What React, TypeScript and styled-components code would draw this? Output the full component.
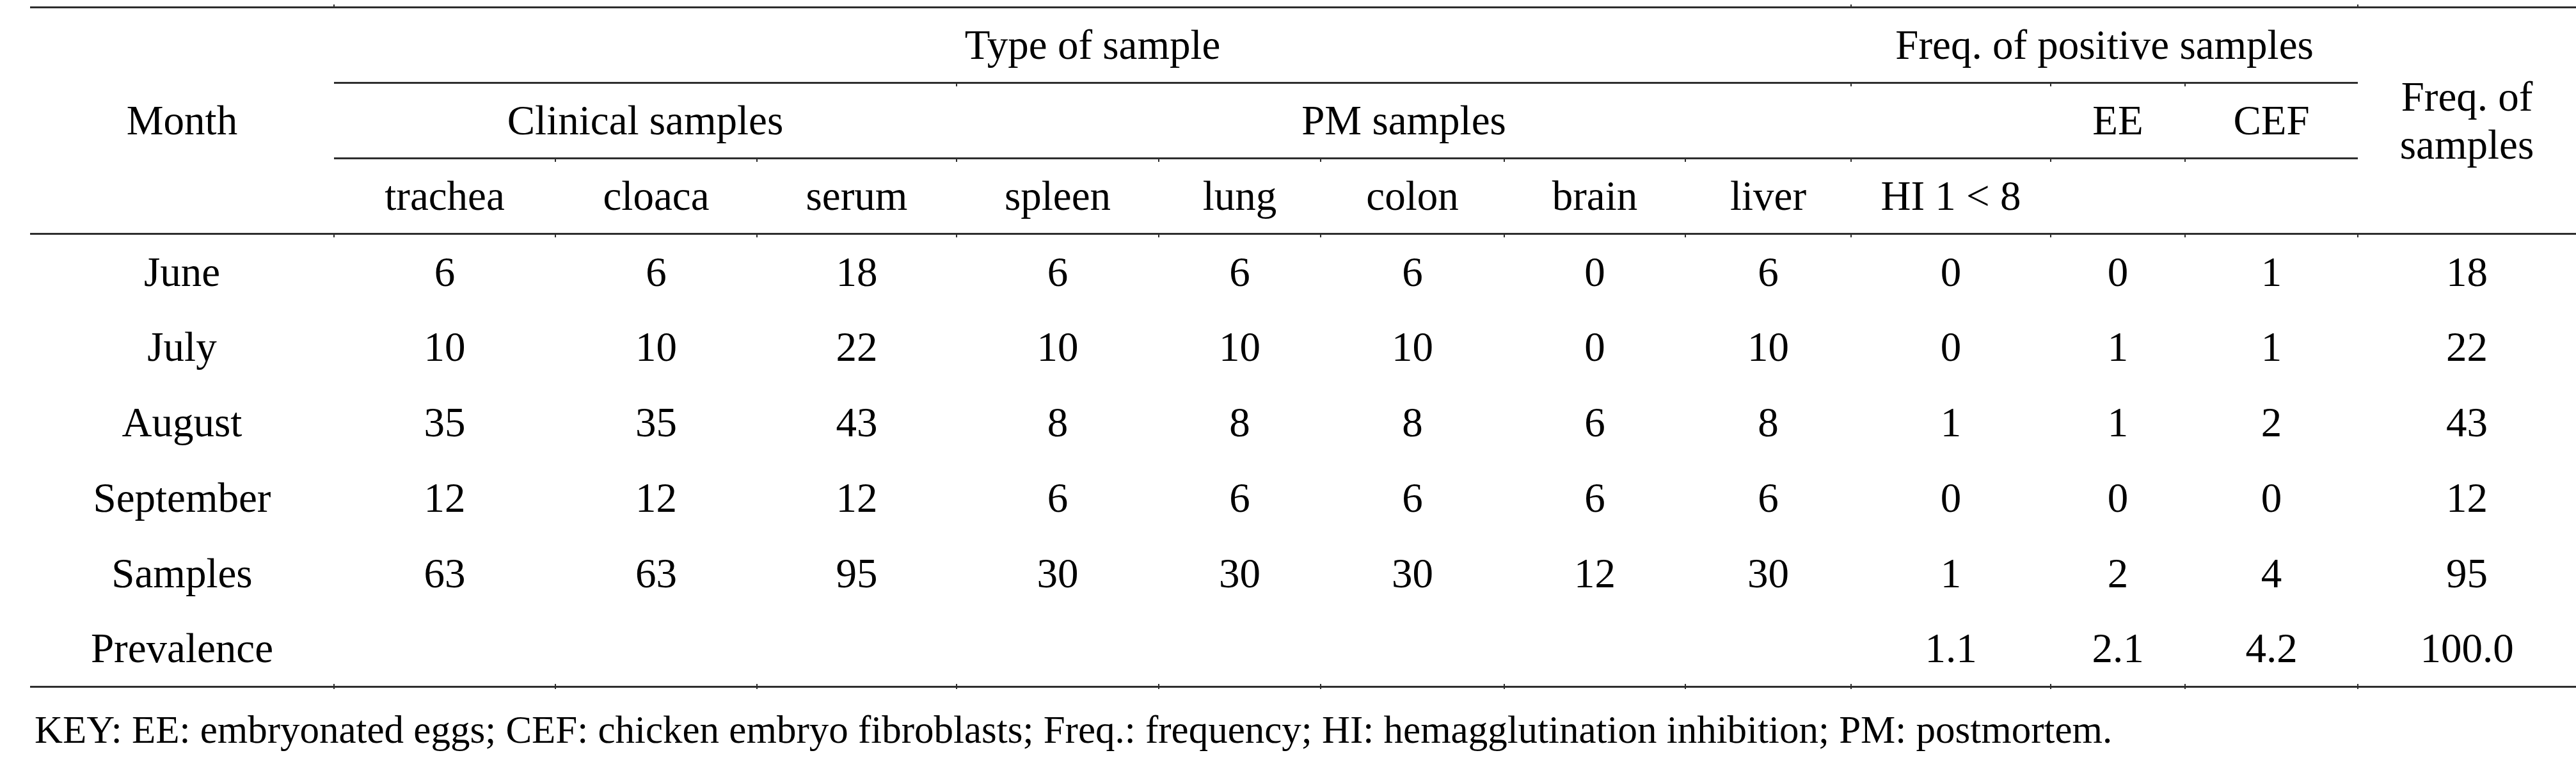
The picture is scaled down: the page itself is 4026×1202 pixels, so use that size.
import styled, { createGlobalStyle } from "styled-components";

const GlobalStyle = createGlobalStyle`
  html, body {
    margin: 0;
    padding: 0;
    background: #ffffff;
  }
`;

const columnWidths = [475, 346, 315, 312, 316, 253, 287, 283, 259, 312, 210, 270, 341];

const bodyRows = [
  ["June", "6", "6", "18", "6", "6", "6", "0", "6", "0", "0", "1", "18"],
  ["July", "10", "10", "22", "10", "10", "10", "0", "10", "0", "1", "1", "22"],
  ["August", "35", "35", "43", "8", "8", "8", "6", "8", "1", "1", "2", "43"],
  ["September", "12", "12", "12", "6", "6", "6", "6", "6", "0", "0", "0", "12"],
  ["Samples", "63", "63", "95", "30", "30", "30", "12", "30", "1", "2", "4", "95"],
  ["Prevalence", "", "", "", "", "", "", "", "", "1.1", "2.1", "4.2", "100.0"],
];

const subHeaders = ["trachea", "cloaca", "serum", "spleen", "lung", "colon", "brain", "liver", "HI 1 < 8", "", ""];

export default function App() {
  const lastRow = bodyRows.length - 1;
  return (
    <>
      <GlobalStyle />
      <Page>
        <Table>
          <colgroup>
            {columnWidths.map((w, i) => (
              <col key={i} style={{ width: w }} />
            ))}
          </colgroup>
          <thead>
            <HeadRow>
              <HeadCell rowSpan={3} $closing>Month</HeadCell>
              <HeadCell colSpan={8} $ruled $tickUp>Type of sample</HeadCell>
              <HeadCell colSpan={3} $ruled $tickUp>Freq. of positive samples</HeadCell>
              <HeadCell rowSpan={3} $closing $tickUp>
                Freq. of
                <br />
                samples
              </HeadCell>
            </HeadRow>
            <HeadRow>
              <HeadCell colSpan={3} $ruled>Clinical samples</HeadCell>
              <HeadCell colSpan={5} $ruled $tick>PM samples</HeadCell>
              <HeadCell $ruled $tick></HeadCell>
              <HeadCell $ruled $tick>EE</HeadCell>
              <HeadCell $ruled $tick>CEF</HeadCell>
            </HeadRow>
            <HeadRow>
              {subHeaders.map((label, i) => (
                <HeadCell key={i} $closing $tick={i > 0}>
                  {label}
                </HeadCell>
              ))}
            </HeadRow>
          </thead>
          <tbody>
            {bodyRows.map((row, r) => (
              <BodyRow key={r} $last={r === lastRow}>
                {row.map((value, c) => (
                  <Cell key={c} $tickTop={c > 0 && r === 0} $tickBottom={c > 0 && r === lastRow}>
                    {value}
                  </Cell>
                ))}
              </BodyRow>
            ))}
          </tbody>
        </Table>
        <Key>
          KEY: EE: embryonated eggs; CEF: chicken embryo fibroblasts; Freq.: frequency; HI: hemagglutination
          inhibition; PM: postmortem.
        </Key>
      </Page>
    </>
  );
}

const Page = styled.div`
  padding: 10px 0 40px 47px;
  font-family: "Liberation Serif", "Times New Roman", serif;
  color: #000000;
`;

const Table = styled.table`
  width: 3979px;
  table-layout: fixed;
  border-collapse: collapse;
  border-top: 3px solid #2e2e2e;
  font-size: 65px;
  line-height: 75px;
`;

const HeadRow = styled.tr`
  height: 118px;
`;

const BodyRow = styled.tr<{ $last?: boolean }>`
  height: 118px;
  border-bottom: ${(p) => (p.$last ? "3px solid #2e2e2e" : "none")};
`;

interface CellProps {
  $ruled?: boolean;
  $closing?: boolean;
  $tick?: boolean;
  $tickUp?: boolean;
}

const HeadCell = styled.th<CellProps>`
  position: relative;
  padding: 0;
  font-weight: normal;
  text-align: center;
  vertical-align: middle;
  white-space: nowrap;
  border-bottom: ${(p) => (p.$ruled || p.$closing ? "3px solid #2e2e2e" : "none")};

  &::before {
    content: "";
    display: ${(p) => (p.$tick || p.$tickUp ? "block" : "none")};
    position: absolute;
    left: -1px;
    top: ${(p) => (p.$tickUp ? "-6px" : "0")};
    width: 2px;
    height: 4px;
    background: #2e2e2e;
  }
`;

const Cell = styled.td<{ $tickTop?: boolean; $tickBottom?: boolean }>`
  position: relative;
  padding: 0;
  text-align: center;
  vertical-align: middle;
  white-space: nowrap;

  &::before {
    content: "";
    display: ${(p) => (p.$tickTop ? "block" : "none")};
    position: absolute;
    left: -1px;
    top: 0;
    width: 2px;
    height: 4px;
    background: #2e2e2e;
  }

  &::after {
    content: "";
    display: ${(p) => (p.$tickBottom ? "block" : "none")};
    position: absolute;
    left: -1px;
    bottom: -5px;
    width: 2px;
    height: 8px;
    background: #2e2e2e;
  }
`;

const Key = styled.div`
  margin-top: 31px;
  padding-left: 7px;
  font-size: 61px;
  line-height: 69px;
  white-space: nowrap;
`;
